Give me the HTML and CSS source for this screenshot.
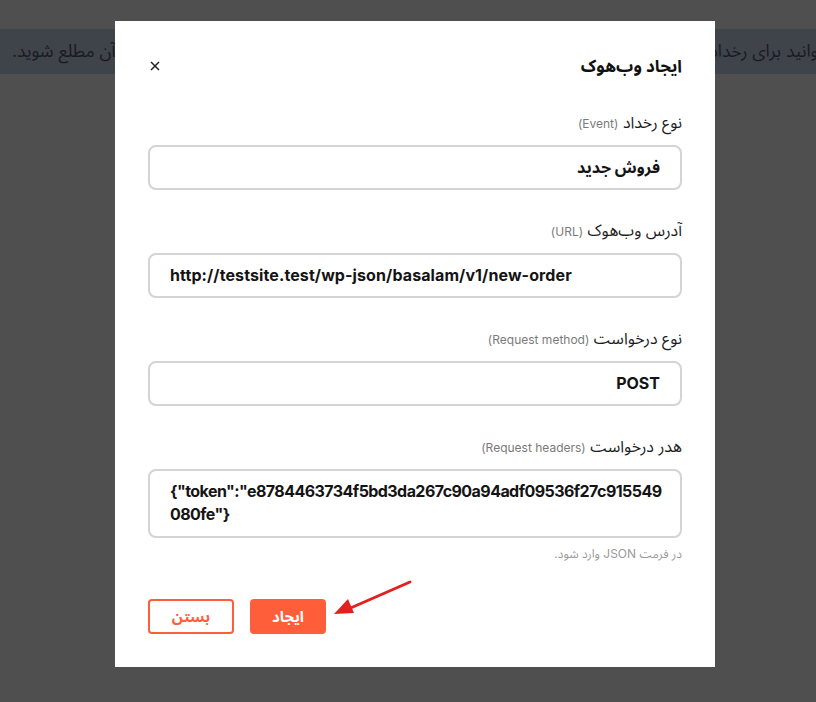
FILE: index.html
```html
<!DOCTYPE html>
<html lang="fa">
<head>
<meta charset="utf-8">
<link rel="stylesheet" href="styles.css">
</head>
<body>
<div class="page">
  <div class="banner">
    <span class="banner-text end">فروشگاه شما رخ می‌دهد، باخبر شوید و از آن مطلع شوید.</span>
    <span class="banner-text start">شما می‌توانید برای رخدادهایی که در</span>
  </div>
</div>

<div class="modal" dir="rtl">
  <div class="modal-head">
    <h2 class="modal-title">ایجاد وب‌هوک</h2>
    <button class="close" aria-label="close">
      <svg width="10" height="10" viewBox="0 0 10 10"><path d="M1 1L9 9M9 1L1 9" stroke="#222" stroke-width="1.5" fill="none"/></svg>
    </button>
  </div>

  <div class="field">
    <label class="label">نوع رخداد <span class="en">(Event)</span></label>
    <div class="input">فروش جدید</div>
  </div>
  <div class="field">
    <label class="label">آدرس وب‌هوک <span class="en">(URL)</span></label>
    <div class="input ltr url" dir="ltr">http://testsite.test/wp-json/basalam/v1/new-order</div>
  </div>
  <div class="field">
    <label class="label">نوع درخواست <span class="en">(Request method)</span></label>
    <div class="input">POST</div>
  </div>
  <div class="field last">
    <label class="label">هدر درخواست <span class="en">(Request headers)</span></label>
    <div class="input ltr area" dir="ltr">{"token":"e8784463734f5bd3da267c90a94adf09536f27c915549<br>080fe"}</div>
    <div class="hint">در فرمت JSON وارد شود.</div>
  </div>

  <div class="actions">
    <button class="btn primary">ایجاد</button>
    <button class="btn outline">بستن</button>
  </div>
</div>

<svg class="arrow" width="90" height="50" viewBox="0 0 90 50">
  <line x1="78" y1="3" x2="14" y2="31" stroke="#e3201f" stroke-width="3" stroke-linecap="round"/>
  <polygon points="2,35 16,20 22,34" fill="#e3201f"/>
</svg>
</body>
</html>
```
FILE: styles.css
```css
* { box-sizing: border-box; }
html, body { margin: 0; padding: 0; }
body {
  width: 816px;
  height: 702px;
  overflow: hidden;
  background: #4f4f4f;
  font-family: "Inter", "Noto Sans Arabic", "Vazirmatn", "DejaVu Sans", sans-serif;
  position: relative;
}
.page { padding-top: 29px; }
.banner {
  height: 45px;
  background: #3f434a;
  display: flex;
  justify-content: space-between;
  align-items: center;
  overflow: hidden;
  padding-left: 12px;
}
.banner-text {
  direction: rtl;
  white-space: nowrap;
  color: #181b22;
  font-size: 17.5px;
  flex-shrink: 0;
}
.banner-text.start { margin-right: -64px; }
.modal {
  position: absolute;
  left: 115px;
  top: 21px;
  width: 600px;
  height: 646px;
  background: #fff;
  padding: 33px 33px 0;
}
.modal-head {
  display: flex;
  justify-content: space-between;
  align-items: center;
  height: 24px;
  margin-bottom: 34px;
}
.modal-title {
  margin: 0;
  font-size: 17px;
  font-weight: 700;
  color: #111;
  line-height: 24px;
  height: 24px;
}
.close {
  border: 0;
  background: none;
  padding: 0;
  margin-left: 2px;
  width: 10px;
  height: 10px;
  display: flex;
}
.field { margin-bottom: 30px; }
.field.last { margin-bottom: 37px; }
.label {
  display: block;
  font-size: 16px;
  line-height: 20px;
  height: 20px;
  color: #1d1d1f;
  margin-bottom: 13px;
}
.label .en { font-size: 12px; color: #7a7a7a; }
.input {
  border: 2px solid #d3d3d8;
  border-radius: 8px;
  padding: 9px 20px;
  font-size: 16px;
  font-weight: 700;
  line-height: 23px;
  color: #141414;
  height: 45px;
}
.input.ltr { text-align: left; }
.input.url { letter-spacing: 0.1px; }
.input.area {
  white-space: nowrap;
  letter-spacing: -0.56px;
  padding-top: 9px;
  padding-bottom: 9px;
  height: 69px;
}
.hint {
  margin-top: 8px;
  font-size: 12px;
  line-height: 16px;
  height: 16px;
  color: #9a9a9a;
}
.actions {
  display: flex;
  gap: 16px;
  justify-content: flex-end;
}
.btn {
  height: 35px;
  border-radius: 4px;
  font-family: inherit;
  font-size: 15px;
  font-weight: 700;
  padding: 0;
}
.btn.primary {
  width: 76px;
  background: #ff5e3a;
  border: 0;
  color: #fff;
}
.btn.outline {
  width: 86px;
  background: #fff;
  border: 2px solid #ff5e3a;
  color: #ff5e3a;
}
.arrow {
  position: absolute;
  left: 332px;
  top: 579px;
}
```
